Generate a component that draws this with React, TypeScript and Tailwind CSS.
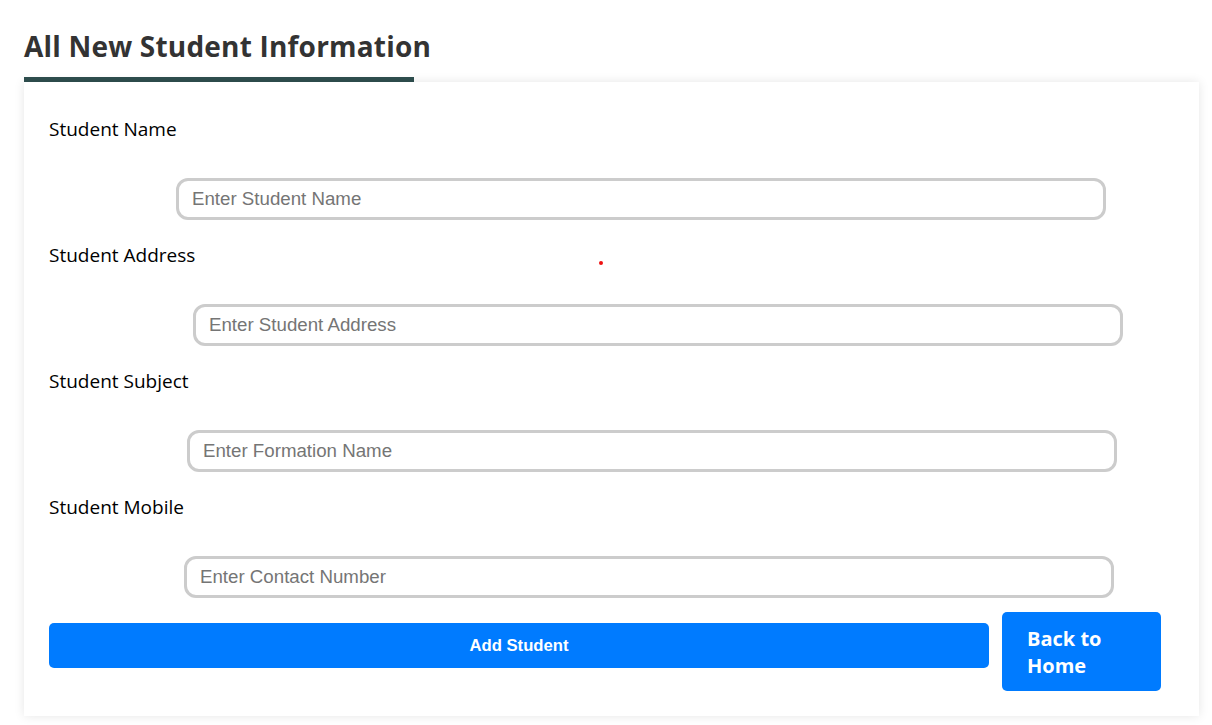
import React from 'react'

const fields = [
  { label: 'Student Name', placeholder: 'Enter Student Name', labelW: 'w-[127px]' },
  { label: 'Student Address', placeholder: 'Enter Student Address', labelW: 'w-[144px]' },
  { label: 'Student Subject', placeholder: 'Enter Formation Name', labelW: 'w-[138px]' },
  { label: 'Student Mobile', placeholder: 'Enter Contact Number', labelW: 'w-[135px]' },
]

export default function App() {
  return (
    <div className="min-h-screen bg-white px-6 pt-[28px] font-['Open_Sans',sans-serif]">
      <h2 className="text-[28px] leading-[36px] font-bold text-[#333333] tracking-[0.2px]">
        All New Student Information
      </h2>
      <div className="mt-[13px] h-[5px] w-[390px] bg-[#2f4f4f]" />

      <div className="relative w-[1175px] bg-white px-[25px] pt-[35px] pb-[25px] shadow-[0_0_10px_rgba(0,0,0,0.1)]">
        {/* stray red dot from the original page */}
        <span className="absolute left-[575px] top-[179px] h-[4px] w-[4px] rounded-full bg-[#ee1111]" />

        {fields.map((f) => (
          <div key={f.label} className="flex h-[126px] items-start">
            <label className={`${f.labelW} shrink-0 whitespace-nowrap text-[19px] leading-[24px] text-black`}>
              {f.label}
            </label>
            <input
              type="text"
              placeholder={f.placeholder}
              className="mt-[61px] h-[42px] w-[930px] rounded-[12px] border-[3px] border-[#cccccc] px-[13px] font-['Liberation_Sans',Arial,sans-serif] text-[18.7px] text-black placeholder:text-[#757575] outline-none"
            />
          </div>
        ))}

        <div className="-mt-[9px] flex items-start gap-[13px]">
          <button className="mt-[11px] h-[45px] w-[940px] rounded-[5px] bg-[#007bff] font-['Liberation_Sans',Arial,sans-serif] text-[16.7px] font-bold text-white">
            Add Student
          </button>
          <a className="block h-[79px] w-[159px] rounded-[5px] bg-[#007bff] px-[25px] pt-[13px] text-[20px] font-bold leading-[27px] text-white">
            Back to Home
          </a>
        </div>
      </div>
    </div>
  )
}
